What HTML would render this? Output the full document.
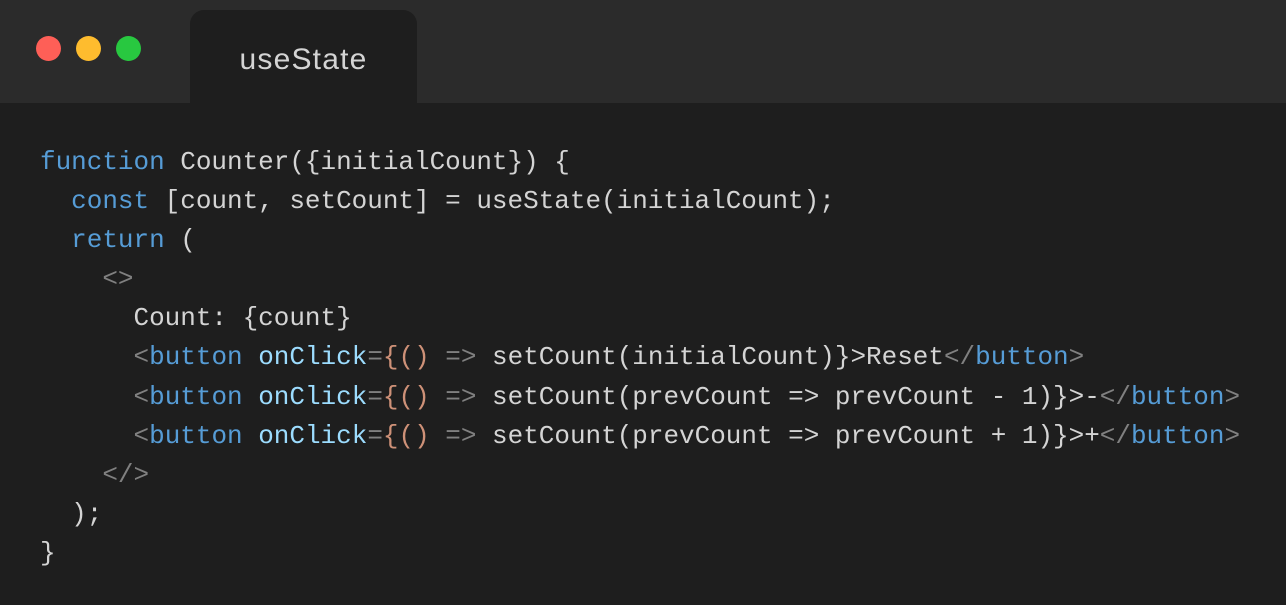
<!DOCTYPE html>
<html><head><meta charset="utf-8"><style>
html,body{margin:0;padding:0;}
body{width:1286px;height:605px;background:#1e1e1e;overflow:hidden;position:relative;font-family:"Liberation Mono",monospace;}
.top{position:absolute;left:0;top:0;width:1286px;height:103px;background:#2b2b2b;}
.dot{position:absolute;top:36px;width:25px;height:25px;border-radius:50%;}
.tab{position:absolute;left:190px;top:10px;width:227px;height:93px;background:#1e1e1e;border-radius:14px 14px 0 0;color:#d4d4d4;font-family:"Liberation Sans",sans-serif;font-size:30px;letter-spacing:1.2px;text-align:center;line-height:100px;}
pre{position:absolute;left:40px;top:143px;margin:0;font-family:"Liberation Mono",monospace;font-size:25.97px;line-height:39.1px;color:#d4d4d4;}
.k{color:#569cd6}.a{color:#9cdcfe}.g{color:#808080}.o{color:#ce9178}
</style></head><body>
<div class="top">
<div class="dot" style="left:36px;background:#fe5f57"></div>
<div class="dot" style="left:76px;background:#febc2e"></div>
<div class="dot" style="left:116px;background:#28c840"></div>
<div class="tab">useState</div>
</div>
<pre><span class="k">function</span> Counter({initialCount}) {
  <span class="k">const</span> [count, setCount] = useState(initialCount);
  <span class="k">return</span> (
    <span class="g">&lt;&gt;</span>
      Count: {count}
      <span class="g">&lt;</span><span class="k">button</span> <span class="a">onClick</span><span class="g">=</span><span class="o">{()</span> <span class="g">=&gt;</span> setCount(initialCount)}&gt;Reset<span class="g">&lt;/</span><span class="k">button</span><span class="g">&gt;</span>
      <span class="g">&lt;</span><span class="k">button</span> <span class="a">onClick</span><span class="g">=</span><span class="o">{()</span> <span class="g">=&gt;</span> setCount(prevCount =&gt; prevCount - 1)}&gt;-<span class="g">&lt;/</span><span class="k">button</span><span class="g">&gt;</span>
      <span class="g">&lt;</span><span class="k">button</span> <span class="a">onClick</span><span class="g">=</span><span class="o">{()</span> <span class="g">=&gt;</span> setCount(prevCount =&gt; prevCount + 1)}&gt;+<span class="g">&lt;/</span><span class="k">button</span><span class="g">&gt;</span>
    <span class="g">&lt;/&gt;</span>
  );
}</pre>
</body></html>
